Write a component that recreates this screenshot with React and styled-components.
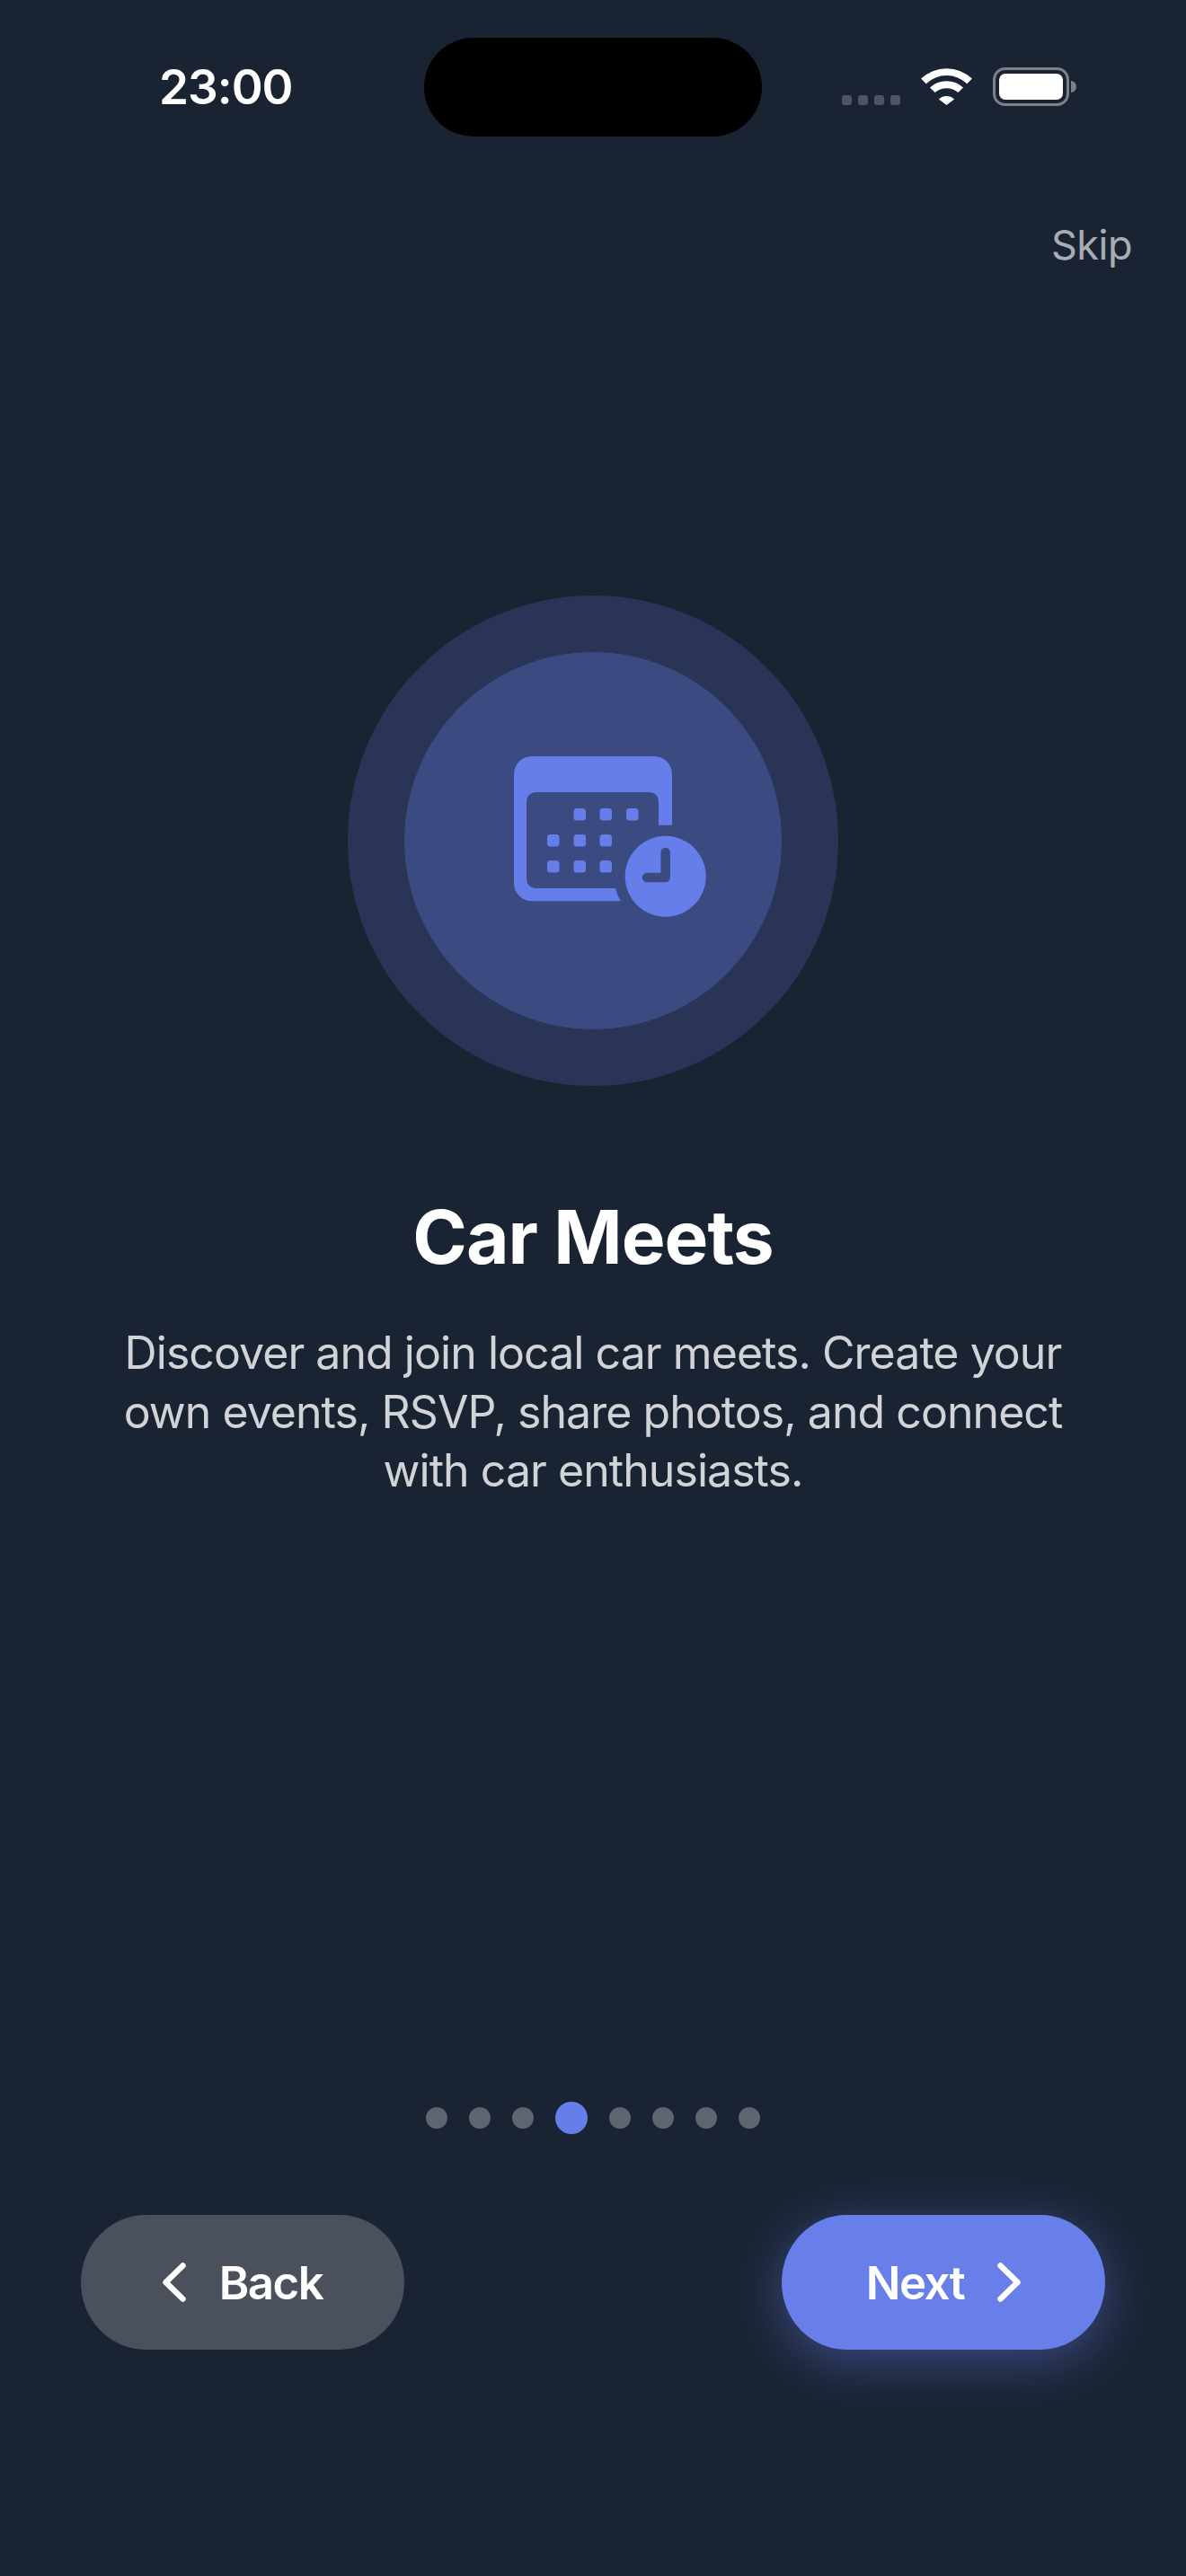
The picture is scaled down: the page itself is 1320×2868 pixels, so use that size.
import styled, { createGlobalStyle } from "styled-components";

const BG = "#1a2332";
const ACCENT = "#667eea";
const INNER = "#3b4b82";

const GlobalStyle = createGlobalStyle`
  html, body { margin: 0; padding: 0; background: ${BG}; }
  * { box-sizing: border-box; }
`;

const Screen = styled.div`
  width: 1320px;
  height: 2868px;
  background: ${BG};
  display: flex;
  flex-direction: column;
  font-family: Inter, "Liberation Sans", sans-serif;
  color: #fff;
  overflow: hidden;
`;

const StatusBar = styled.div`
  display: grid;
  grid-template-columns: 1fr 376px 1fr;
  height: 152px;
  padding-top: 42px;
`;

const Time = styled.div`
  padding-left: 177px;
  padding-top: 35px;
  font-size: 53px;
  line-height: 40px;
  font-weight: 600;
  letter-spacing: -1px;
`;

const Island = styled.div`
  height: 110px;
  border-radius: 55px;
  background: #000;
`;

const StatusIcons = styled.div`
  display: flex;
  align-items: flex-start;
  padding: 33px 0 0 89px;
`;

const SignalDots = styled.div`
  display: flex;
  gap: 7px;
  margin-top: 31px;
  margin-right: 23px;
`;

const SignalDot = styled.span`
  width: 11px;
  height: 11px;
  border-radius: 3px;
  background: #4d5562;
`;

const WifiIcon = styled.svg`
  width: 57px;
  height: 42px;
  margin-right: 23px;
`;

const BatteryIcon = styled.svg`
  width: 93px;
  height: 43px;
`;

const SkipRow = styled.div`
  display: flex;
  justify-content: flex-end;
  padding: 93px 60px 0 0;
`;

const SkipLabel = styled.span`
  font-size: 45px;
  line-height: 56px;
  letter-spacing: -0.5px;
  color: rgba(255, 255, 255, 0.65);
`;

const Hero = styled.div`
  display: flex;
  flex-direction: column;
  align-items: center;
  padding-top: 362px;
`;

const OuterRing = styled.div`
  width: 546px;
  height: 546px;
  border-radius: 50%;
  background: #293457;
  display: flex;
  align-items: center;
  justify-content: center;
`;

const InnerRing = styled.div`
  width: 420px;
  height: 420px;
  border-radius: 50%;
  background: ${INNER};
  display: flex;
  align-items: center;
  justify-content: center;
`;

const MeetIcon = styled.svg`
  width: 260px;
  height: 230px;
`;

const Title = styled.h1`
  margin: 121px 0 0;
  font-size: 82px;
  line-height: 96px;
  font-weight: 700;
  letter-spacing: -1px;
  text-align: center;
`;

const Description = styled.p`
  margin: 48px 0 0;
  width: 1100px;
  font-size: 50px;
  line-height: 65.5px;
  font-weight: 400;
  letter-spacing: -0.95px;
  text-align: center;
  color: rgba(255, 255, 255, 0.8);
`;

const Spacer = styled.div`
  flex: 1;
`;

const Pager = styled.div`
  display: flex;
  justify-content: center;
  align-items: center;
  gap: 24px;
  margin-bottom: 90px;
`;

const PagerDot = styled.span`
  width: ${(props) => (props.$active ? 36 : 24)}px;
  height: ${(props) => (props.$active ? 36 : 24)}px;
  border-radius: 50%;
  background: ${(props) => (props.$active ? ACCENT : "rgba(255, 255, 255, 0.3)")};
`;

const Footer = styled.div`
  display: flex;
  justify-content: space-between;
  padding: 0 90px 252px;
`;

const NavButton = styled.button`
  width: 360px;
  height: 150px;
  border: none;
  border-radius: 72px / 75px;
  display: flex;
  align-items: center;
  justify-content: center;
  gap: 37px;
  padding: 0;
  font-family: inherit;
  font-size: 51px;
  font-weight: 600;
  letter-spacing: -1.5px;
  color: #fff;
  background: ${(props) => (props.$primary ? "#687fe9" : "#4a505c")};
  box-shadow: ${(props) => (props.$primary ? "0 12px 60px rgba(102, 126, 234, 0.45)" : "none")};
`;

const Chevron = styled.svg`
  width: 26px;
  height: 44px;
`;

const dots = [0, 1, 2, 3, 4, 5, 6, 7];

export default function App() {
  return (
    <Screen>
      <GlobalStyle />
      <StatusBar>
        <Time>23:00</Time>
        <Island />
        <StatusIcons>
          <SignalDots>
            <SignalDot />
            <SignalDot />
            <SignalDot />
            <SignalDot />
          </SignalDots>
          <WifiIcon viewBox="0 0 172 127">
            <path fill="#fff" d="M0 38 A125 125 0 0 1 172 38 L155 55 A100 100 0 0 0 17 55 Z" />
            <path fill="#fff" d="M30 68 A82 82 0 0 1 142 68 L125 85 A58 58 0 0 0 47 85 Z" />
            <path fill="#fff" d="M60 107 A38 38 0 0 1 112 107 L86 127 Z" />
          </WifiIcon>
          <BatteryIcon viewBox="0 0 93 43">
            <rect x="1.5" y="1.5" width="82" height="40" rx="12" fill="none" stroke="#7b8089" strokeWidth="3" />
            <rect x="7" y="7" width="71" height="29" rx="7" fill="#fff" />
            <path fill="#7b8089" d="M87 15 A6 6.5 0 0 1 87 28 Z" />
          </BatteryIcon>
        </StatusIcons>
      </StatusBar>
      <SkipRow>
        <SkipLabel>Skip</SkipLabel>
      </SkipRow>
      <Hero>
        <OuterRing>
          <InnerRing>
            <MeetIcon viewBox="-10 11 260 230">
              <path
                fill={ACCENT}
                d="M52 32 H188 A20 20 0 0 1 208 52 V108.7 H193 V82 A10 10 0 0 0 183 72 H56 A10 10 0 0 0 46 82 V169 A10 10 0 0 0 56 179 H145 Q147 187 151 193.3 H52 A20 20 0 0 1 32 173 V52 A20 20 0 0 1 52 32 Z"
              />
              {[
                [98.5, 90], [127.5, 90], [157, 90],
                [69, 119], [98.5, 119], [127.5, 119],
                [69, 148], [98.5, 148], [127.5, 148],
              ].map(([x, y]) => (
                <rect key={`${x}-${y}`} x={x} y={y} width="13.5" height="13.5" rx="3.5" fill={ACCENT} />
              ))}
              <circle cx="200.7" cy="165.7" r="45" fill={ACCENT} />
              <path d="M200.7 139 V167 H180" fill="none" stroke={INNER} strokeWidth="10.5" strokeLinecap="round" strokeLinejoin="round" />
            </MeetIcon>
          </InnerRing>
        </OuterRing>
        <Title>Car Meets</Title>
        <Description>
          Discover and join local car meets. Create your own events, RSVP, share photos, and connect with car enthusiasts.
        </Description>
      </Hero>
      <Spacer />
      <Pager>
        {dots.map((d) => (
          <PagerDot key={d} $active={d === 3} />
        ))}
      </Pager>
      <Footer>
        <NavButton>
          <Chevron viewBox="0 0 26 44">
            <path d="M22.5 3.5 L3.5 22 L22.5 40.5" fill="none" stroke="#fff" strokeWidth="6.5" strokeLinecap="round" strokeLinejoin="round" />
          </Chevron>
          Back
        </NavButton>
        <NavButton $primary>
          Next
          <Chevron viewBox="0 0 26 44">
            <path d="M3.5 3.5 L22.5 22 L3.5 40.5" fill="none" stroke="#fff" strokeWidth="6.5" strokeLinecap="round" strokeLinejoin="round" />
          </Chevron>
        </NavButton>
      </Footer>
    </Screen>
  );
}
